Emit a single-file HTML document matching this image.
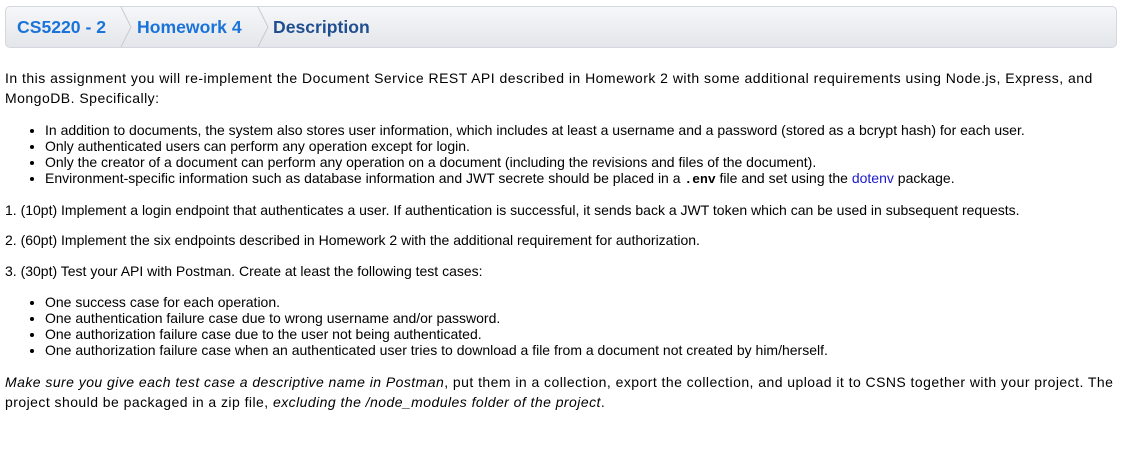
<!DOCTYPE html>
<html><head><style>
body{margin:0;background:#fff;font-family:"Liberation Sans",Arial,sans-serif;color:#000;}
.bc{position:absolute;left:5px;top:6px;width:1110px;height:40px;border:1px solid #d4d8de;border-radius:5px;background:linear-gradient(#f6f7f9,#e3e6ea);overflow:hidden}
.bc span{position:absolute;top:10px;font-weight:bold;font-size:17.6px;color:#1a73d9}
.sep{position:absolute;top:0;height:40px;width:12px}
.c{position:absolute;left:5px;width:1112px;font-size:14px;line-height:20px;white-space:nowrap}
ul{margin:0;padding-left:40px;font-size:14px;line-height:16px}
code{font-family:"Liberation Mono",monospace;font-weight:bold;font-size:13px}
a{color:#1a1acc;text-decoration:none}
</style></head><body>
<div class="bc">
<span style="left:11px">CS5220 - 2</span>
<svg class="sep" style="left:114px" viewBox="0 0 12 40"><polyline points="1,0 11,20 1,40" fill="none" stroke="#c6cbd2" stroke-width="1"/></svg>
<span style="left:131px">Homework 4</span>
<svg class="sep" style="left:251px" viewBox="0 0 12 40"><polyline points="1,0 11,20 1,40" fill="none" stroke="#c6cbd2" stroke-width="1"/></svg>
<span style="left:267px;color:#1f4f8f">Description</span>
</div>
<div class="c" style="top:68px;letter-spacing:0.48px">In this assignment you will re-implement the Document Service REST API described in Homework 2 with some additional requirements using Node.js, Express, and<br>MongoDB. Specifically:</div>
<div class="c" style="top:122px"><ul>
<li>In addition to documents, the system also stores user information, which includes at least a username and a password (stored as a bcrypt hash) for each user.</li>
<li>Only authenticated users can perform any operation except for login.</li>
<li>Only the creator of a document can perform any operation on a document (including the revisions and files of the document).</li>
<li>Environment-specific information such as database information and JWT secrete should be placed in a <code>.env</code> file and set using the <a>dotenv</a> package.</li>
</ul></div>
<div class="c" style="top:200px">1. (10pt) Implement a login endpoint that authenticates a user. If authentication is successful, it sends back a JWT token which can be used in subsequent requests.</div>
<div class="c" style="top:230px">2. (60pt) Implement the six endpoints described in Homework 2 with the additional requirement for authorization.</div>
<div class="c" style="top:261px">3. (30pt) Test your API with Postman. Create at least the following test cases:</div>
<div class="c" style="top:294px"><ul>
<li>One success case for each operation.</li>
<li>One authentication failure case due to wrong username and/or password.</li>
<li>One authorization failure case due to the user not being authenticated.</li>
<li>One authorization failure case when an authenticated user tries to download a file from a document not created by him/herself.</li>
</ul></div>
<div class="c" style="top:372px;letter-spacing:0.45px"><i>Make sure you give each test case a descriptive name in Postman</i>, put them in a collection, export the collection, and upload it to CSNS together with your project. The<br>project should be packaged in a zip file, <i>excluding the /node_modules folder of the project</i>.</div>
</body></html>
